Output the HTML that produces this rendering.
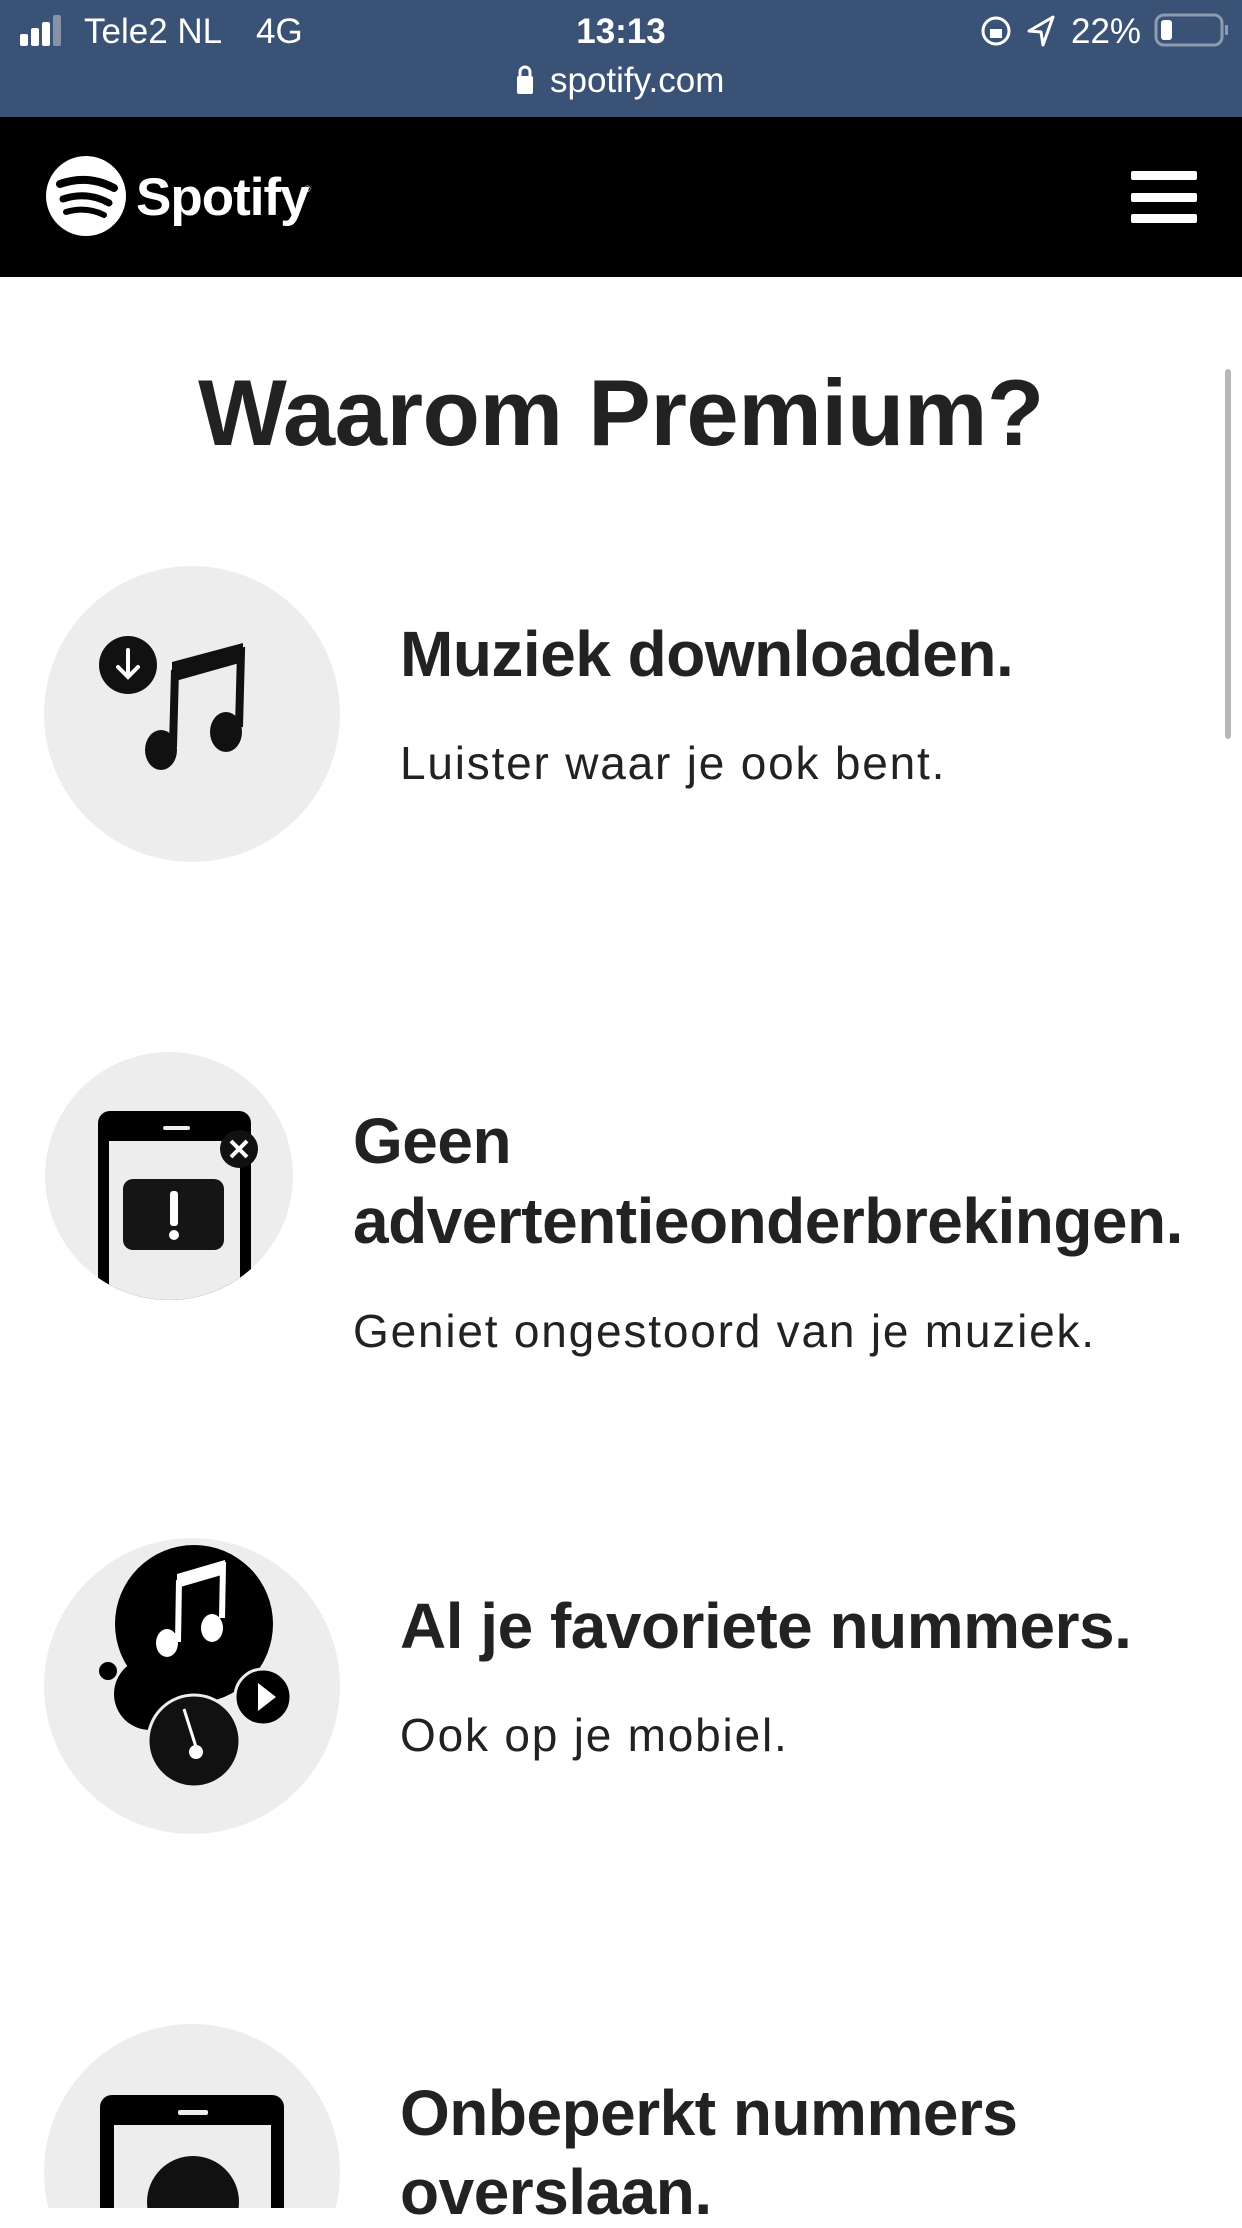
<!DOCTYPE html>
<html><head><meta charset="utf-8"><style>
*{margin:0;padding:0;box-sizing:border-box}
body{width:1242px;height:2208px;overflow:hidden;background:#fff;position:relative;font-family:"Liberation Sans",sans-serif;color:#222}
.a{position:absolute;white-space:nowrap}
.h{font-weight:bold;font-size:64px;line-height:64px;letter-spacing:-0.5px}
.s{font-size:46px;line-height:46px;letter-spacing:1.8px}
</style></head><body>
<div class="a" style="left:0;top:0;width:1242px;height:117px;background:#3a5276"></div>
<div class="a" style="left:0;top:117px;width:1242px;height:160px;background:#000"></div>
<svg class="a" style="left:0;top:0" width="1242" height="277">
 <rect x="20" y="34" width="8" height="12" rx="2" fill="#fff"/>
 <rect x="31" y="28" width="8" height="18" rx="2" fill="#fff"/>
 <rect x="42" y="22" width="8" height="24" rx="2" fill="#fff"/>
 <rect x="53" y="15" width="8" height="31" rx="2" fill="#8592a8"/>
 <text x="84" y="43" fill="#fff" font-family="Liberation Sans" font-size="35">Tele2 NL</text>
 <text x="256" y="43" fill="#fff" font-family="Liberation Sans" font-size="35">4G</text>
 <text x="621" y="43" fill="#fff" font-family="Liberation Sans" font-size="35" font-weight="bold" text-anchor="middle">13:13</text>
 <circle cx="996" cy="31" r="13" fill="none" stroke="#fff" stroke-width="3"/>
 <rect x="990" y="29" width="12" height="9" fill="#fff"/>
 <path d="M1053 17 L1029 31 L1041 32 L1043 45 Z" fill="none" stroke="#fff" stroke-width="3" stroke-linejoin="round"/>
 <text x="1071" y="43" fill="#fff" font-family="Liberation Sans" font-size="35">22%</text>
 <rect x="1156" y="15" width="66" height="30" rx="8" fill="none" stroke="#8f9bb0" stroke-width="3"/>
 <rect x="1161" y="20" width="11" height="20" rx="3" fill="#fff"/>
 <rect x="1225" y="25" width="3" height="10" rx="1" fill="#8f9bb0"/>
 <rect x="517" y="76" width="16" height="18" rx="2" fill="#fff"/>
 <path d="M520 77 v-5 a5 5 0 0 1 10 0 v5" fill="none" stroke="#fff" stroke-width="3"/>
 <text x="550" y="92" fill="#fff" font-family="Liberation Sans" font-size="35">spotify.com</text>
 <circle cx="86" cy="196" r="40" fill="#fff"/>
 <path d="M60 184 q28 -10 54 4" stroke="#000" stroke-width="8" fill="none" stroke-linecap="round"/>
 <path d="M63 199 q24 -8 46 4" stroke="#000" stroke-width="7" fill="none" stroke-linecap="round"/>
 <path d="M66 212 q20 -6 38 3" stroke="#000" stroke-width="6" fill="none" stroke-linecap="round"/>
 <text x="136" y="215" fill="#fff" font-family="Liberation Sans" font-size="53" font-weight="bold" letter-spacing="-1">Spotify</text>
 <text x="304" y="192" fill="#fff" font-family="Liberation Sans" font-size="9">®</text>
 <rect x="1131" y="171" width="66" height="9" rx="2" fill="#fff"/>
 <rect x="1131" y="193" width="66" height="9" rx="2" fill="#fff"/>
 <rect x="1131" y="214" width="66" height="9" rx="2" fill="#fff"/>
</svg>
<div class="a" style="left:1225px;top:369px;width:6px;height:370px;border-radius:3px;background:#b8b8b8"></div>
<div class="a" style="left:0;width:1242px;top:366px;text-align:center;font-weight:bold;font-size:94px;line-height:94px;letter-spacing:-0.5px">Waarom Premium?</div>

<svg class="a" style="left:0;top:540px" width="360" height="1668">
 <circle cx="192" cy="174" r="148" fill="#ededed"/>
 <circle cx="128" cy="125" r="29" fill="#111"/>
 <path d="M128 110 v26 M118 127 l10 10 l10 -10" stroke="#fff" stroke-width="4" fill="none" stroke-linecap="round"/>
 <path d="M175 130 L241 112 L239 187" stroke="#111" stroke-width="8" fill="none"/>
 <path d="M175 130 L173 207" stroke="#111" stroke-width="8" fill="none"/>
 <path d="M172 122 L243 103 L243 122 L172 142 Z" fill="#111"/>
 <ellipse cx="161" cy="210" rx="16" ry="20" fill="#111"/>
 <ellipse cx="226" cy="192" rx="16" ry="20" fill="#111"/>

 <circle cx="169" cy="636" r="124" fill="#ededed"/>
 <clipPath id="c2"><circle cx="169" cy="636" r="124"/></clipPath>
 <g clip-path="url(#c2)">
  <rect x="98" y="571" width="153" height="200" rx="12" fill="#000"/>
  <rect x="109" y="601" width="131" height="200" fill="#ededed"/>
  <rect x="163" y="586" width="27" height="4" rx="2" fill="#ededed"/>
  <rect x="123" y="639" width="101" height="71" rx="10" fill="#151515"/>
  <rect x="170" y="651" width="8" height="35" rx="3" fill="#fff"/>
  <circle cx="174" cy="695" r="5" fill="#fff"/>
 </g>
 <circle cx="239" cy="609" r="19" fill="#111"/>
 <path d="M231 601 l16 16 M247 601 l-16 16" stroke="#fff" stroke-width="4"/>

 <circle cx="192" cy="1146" r="148" fill="#ededed"/>
 <circle cx="108" cy="1131" r="9" fill="#000"/>
 <circle cx="194" cy="1084" r="79" fill="#000"/>
 <circle cx="150" cy="1154" r="36" fill="#000"/>
 <circle cx="263" cy="1157" r="28" fill="#000" stroke="#ededed" stroke-width="3"/>
 <path d="M258 1143 L276 1157 L258 1171 Z" fill="#fff"/>
 <circle cx="194" cy="1201" r="46" fill="#111" stroke="#ededed" stroke-width="3"/>
 <path d="M184 1169 L196 1207" stroke="#fff" stroke-width="3"/>
 <circle cx="196" cy="1212" r="7" fill="#fff"/>
 <path d="M179 1040 L223 1026 L222 1078 M179 1040 L178 1102" stroke="#fff" stroke-width="6" fill="none"/>
 <path d="M177 1034 L225 1020 L225 1034 L177 1048 Z" fill="#fff"/>
 <ellipse cx="167" cy="1103" rx="11" ry="14" fill="#fff"/>
 <ellipse cx="212" cy="1088" rx="11" ry="14" fill="#fff"/>

 <circle cx="192" cy="1632" r="148" fill="#ededed"/>
 <rect x="100" y="1555" width="184" height="200" rx="12" fill="#000"/>
 <rect x="114" y="1585" width="157" height="200" fill="#ededed"/>
 <rect x="178" y="1570" width="30" height="5" rx="2" fill="#ededed"/>
 <circle cx="193" cy="1662" r="46" fill="#111"/>
</svg>

<div class="a h" style="left:400px;top:622px">Muziek downloaden.</div>
<div class="a s" style="left:400px;top:740px">Luister waar je ook bent.</div>

<div class="a h" style="left:353px;top:1109px">Geen</div>
<div class="a h" style="left:353px;top:1189px">advertentieonderbrekingen.</div>
<div class="a s" style="left:353px;top:1308px">Geniet ongestoord van je muziek.</div>

<div class="a h" style="left:400px;top:1594px">Al je favoriete nummers.</div>
<div class="a s" style="left:400px;top:1712px">Ook op je mobiel.</div>

<div class="a h" style="left:400px;top:2081px">Onbeperkt nummers</div>
<div class="a h" style="left:400px;top:2160px">overslaan.</div>
</body></html>
